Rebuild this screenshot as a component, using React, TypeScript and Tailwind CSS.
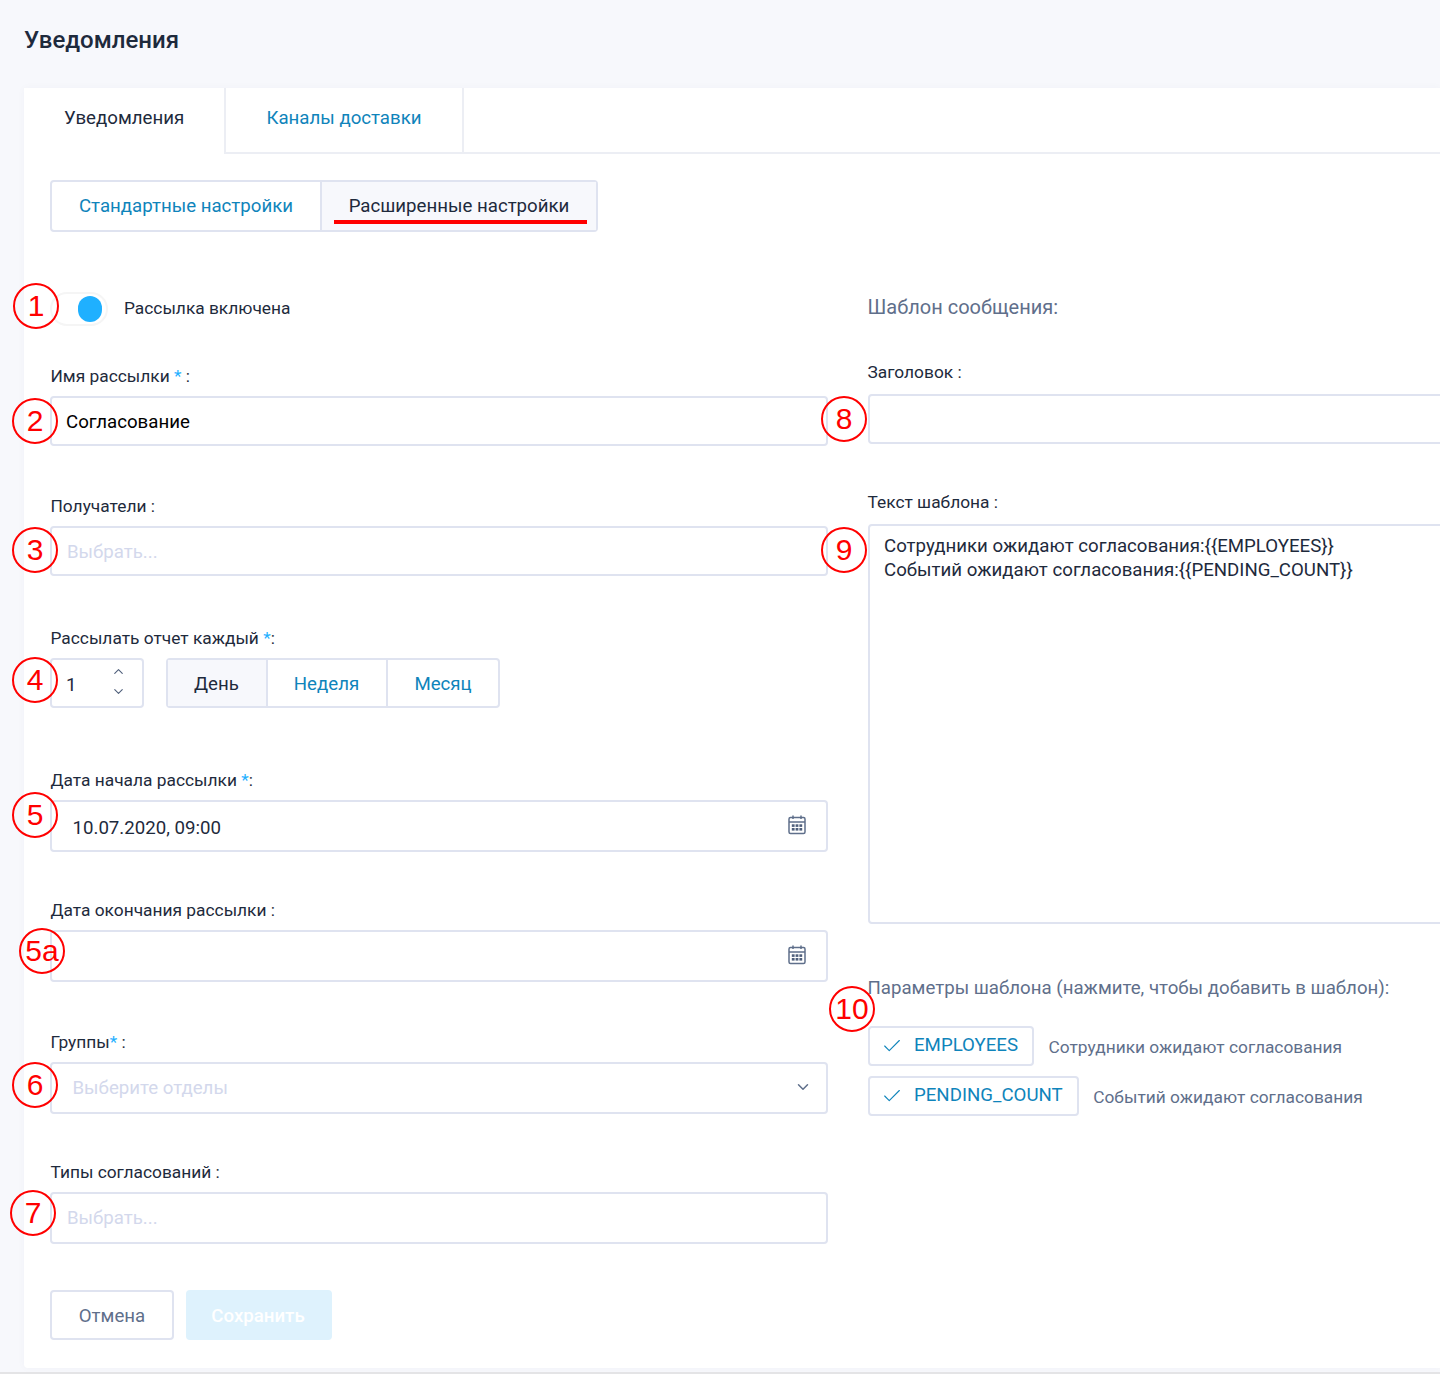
import React from "react";
import { ChevronUp, ChevronDown, Check } from "lucide-react";

const Req = () => <span className="text-[#1fb0ff]">*</span>;

const Label = ({ children }: { children: React.ReactNode }) => (
  <div className="h-5 mb-[10px] text-[17.33px] leading-5 text-[#1e2a3c] pl-[0.5px]">{children}</div>
);

const CalendarIcon = () => (
  <svg width="20" height="22" viewBox="0 0 20 22" fill="none" stroke="#5f6f8b" strokeWidth="1.5" className="mb-[2px]">
    <rect x="2" y="3.5" width="16" height="16" rx="1.5" />
    <path d="M2 8h16M6 1.5v3.5M14 1.5v3.5" />
    <g fill="#4f5f7b" stroke="none">
      <rect x="4.8" y="10.3" width="2.8" height="2.6" />
      <rect x="8.6" y="10.3" width="2.8" height="2.6" />
      <rect x="12.4" y="10.3" width="2.8" height="2.6" />
      <rect x="4.8" y="14" width="2.8" height="2.6" />
      <rect x="8.6" y="14" width="2.8" height="2.6" />
      <rect x="12.4" y="14" width="2.8" height="2.6" />
    </g>
  </svg>
);

const Marker = ({ n, className }: { n: string; className: string }) => (
  <div
    className={`absolute w-[46px] h-[46px] rounded-full border-[2.5px] border-[#ff0000] flex items-center justify-center text-[#ff0000] text-[30px] leading-none font-['Liberation_Sans',sans-serif] ${className}`}
  >
    {n}
  </div>
);

const Chip = ({ name, desc }: { name: string; desc: string }) => (
  <div className="flex items-center h-10">
    <div className="h-10 flex items-center border-2 border-[#dfe3f0] rounded pl-[11px] pr-[14px] text-[#0f84bb] text-[18.66px]">
      <Check size={22} strokeWidth={1.2} className="mr-[11px]" />
      <span>{name}</span>
    </div>
    <span className="ml-[14.5px] pt-1 text-[17.33px] text-[#5f6f8b]">{desc}</span>
  </div>
);

const fieldBox = "border-2 border-[#dfe3f0] rounded flex items-center text-[18.66px]";

export default function App() {
  return (
    <div className="relative w-[1440px] h-[1374px] overflow-hidden bg-[#f7f8fc] font-['Roboto',sans-serif]">
      <h1 className="pl-6 pt-[26px] h-[88px] text-[24px] leading-7 font-medium text-[#1e2a3c]">Уведомления</h1>

      <div className="ml-6 h-[1280px] bg-white rounded-bl shadow-[0_0_8px_rgba(40,50,90,0.03)]">
        <div className="flex h-[66px]">
          <div className="w-[202px] pt-[17px] pl-[40px] border-r-2 border-[#eceef4] text-[18.66px] leading-[26px] text-[#1e2a3c]">Уведомления</div>
          <div className="w-[238px] pt-[17px] text-center border-r-2 border-b-2 border-[#eceef4] text-[18.66px] leading-[26px] text-[#0f84bb]">Каналы доставки</div>
          <div className="flex-1 border-b-2 border-[#eceef4]" />
        </div>

        <div className="pl-[26px] pt-[26px]">
          <div className="relative flex w-[548px] h-[52px] border-2 border-[#dfe3f0] rounded text-[18.66px]">
            <div className="w-[270px] flex items-center justify-center border-r-2 border-[#dfe3f0] text-[#0f84bb] pt-[2px]">Стандартные настройки</div>
            <div className="flex-1 flex items-center justify-center bg-[#f7f8fc] text-[#1e2a3c] pt-[2px]">Расширенные настройки</div>
            <div className="absolute left-[282px] top-[38px] w-[253px] h-1 bg-[#ff0000]" />
          </div>

          <div className="flex mt-[60px]">
            <div className="w-[778px] shrink-0 flex flex-col">
              <div className="flex items-center h-[34px] mb-[40px]">
                <div className="w-[58px] h-[34px] rounded-full border-2 border-[#f5f5f5] flex items-center justify-end pr-[4px]">
                  <div className="w-6 h-[26px] rounded-full bg-[#1fb0ff]" />
                </div>
                <span className="ml-4 text-[17.33px] text-[#1e2a3c]">Рассылка включена</span>
              </div>

              <Label>Имя рассылки <Req /> :</Label>
              <div className={`${fieldBox} h-[50px] mb-[50px] pl-[14px] pt-1 text-black`}>Согласование</div>

              <Label>Получатели :</Label>
              <div className={`${fieldBox} h-[50px] mb-[52px] pl-[15px] pt-1 text-[#d3d8ec]`}>Выбрать...</div>

              <Label>Рассылать отчет каждый <Req />:</Label>
              <div className="mb-[62px] flex gap-[22px]">
                <div className={`${fieldBox} w-[94px] h-[50px] justify-between pl-[14px] pr-[16px] text-[#1e2a3c]`}>
                  <span className="pt-[6px]">1</span>
                  <div className="flex flex-col gap-[5px] mb-[3px] text-[#4f5f7b]">
                    <ChevronUp size={15} strokeWidth={1.8} />
                    <ChevronDown size={15} strokeWidth={1.8} />
                  </div>
                </div>
                <div className="w-[334px] h-[50px] flex border-2 border-[#dfe3f0] rounded text-[18.66px]">
                  <div className="w-[100px] flex items-center justify-center bg-[#f7f8fc] border-r-2 border-[#dfe3f0] text-[#1e2a3c] pt-1 pr-px">День</div>
                  <div className="w-[120px] flex items-center justify-center border-r-2 border-[#dfe3f0] text-[#0f84bb] pt-1 pr-px">Неделя</div>
                  <div className="flex-1 flex items-center justify-center text-[#0f84bb] pt-1">Месяц</div>
                </div>
              </div>

              <Label>Дата начала рассылки <Req />:</Label>
              <div className={`${fieldBox} h-[52px] mb-[48px] justify-between pl-[20.5px] pr-[19px] text-[#1e2a3c]`}>
                <span className="pt-[6px]">10.07.2020, 09:00</span>
                <CalendarIcon />
              </div>

              <Label>Дата окончания рассылки :</Label>
              <div className={`${fieldBox} h-[52px] mb-[50px] justify-end pr-[19px]`}>
                <CalendarIcon />
              </div>

              <Label>Группы<Req /> :</Label>
              <div className={`${fieldBox} h-[52px] mb-[48px] justify-between pl-[20.5px] pr-[14px] text-[#d3d8ec]`}>
                <span className="pt-[2px]">Выберите отделы</span>
                <ChevronDown size={18} strokeWidth={2} className="text-[#5f6f8b] mb-[2px]" />
              </div>

              <Label>Типы согласований :</Label>
              <div className={`${fieldBox} h-[52px] mb-[46px] pl-[15px] pt-[2px] text-[#d3d8ec]`}>Выбрать...</div>

              <div className="flex gap-3">
                <div className="w-[124px] h-[50px] border-2 border-[#dfe3f0] rounded flex items-center justify-center pt-1 text-[18.66px] text-[#5f6f8b]">Отмена</div>
                <div className="w-[146px] h-[50px] rounded bg-[#def2fd] flex items-center justify-center pt-1 text-[18.66px] font-medium text-white pr-[2px]">Сохранить</div>
              </div>
            </div>

            <div className="ml-10 w-[640px] shrink-0 flex flex-col">
              <div className="h-[30px] mb-[40px] leading-[30px] text-[20px] text-[#5f6f8b] -ml-[0.5px]">Шаблон сообщения:</div>
              <div className="-ml-[1px]"><Label>Заголовок :</Label></div>
              <div className="-mt-[10px] mb-[48px] pt-[12px]">
                <div className="h-[50px] border-2 border-[#dfe3f0] rounded" />
              </div>
              <div className="-ml-[1px]"><Label>Текст шаблона :</Label></div>
              <div className="-mt-[10px] mb-[52px] pt-[12px]">
                <div className="h-[400px] border-2 border-[#dfe3f0] rounded pl-[14px] pt-[8px] text-[18.66px] leading-6 text-[#1e2a3c]">
                  Сотрудники ожидают согласования:{"{{EMPLOYEES}}"}
                  <br />
                  Событий ожидают согласования:{"{{PENDING_COUNT}}"}
                </div>
              </div>
              <div className="h-6 mb-[26px] leading-6 text-[18.66px] text-[#5f6f8b] -ml-[0.5px]">Параметры шаблона (нажмите, чтобы добавить в шаблон):</div>
              <div className="flex flex-col gap-[10px]">
                <Chip name="EMPLOYEES" desc="Сотрудники ожидают согласования" />
                <Chip name="PENDING_COUNT" desc="Событий ожидают согласования" />
              </div>
            </div>
          </div>
        </div>
      </div>
      <div className="absolute left-0 right-0 bottom-0 h-[2px] bg-[#e4e4e6]" />

      <Marker n="1" className="left-[13px] top-[283px]" />
      <Marker n="2" className="left-[12px] top-[398px]" />
      <Marker n="3" className="left-[12px] top-[527px]" />
      <Marker n="4" className="left-[12px] top-[657px]" />
      <Marker n="5" className="left-[12px] top-[792px]" />
      <Marker n="5a" className="left-[19px] top-[928px]" />
      <Marker n="6" className="left-[12px] top-[1062px]" />
      <Marker n="7" className="left-[10px] top-[1190px]" />
      <Marker n="8" className="left-[821px] top-[396px]" />
      <Marker n="9" className="left-[821px] top-[527px]" />
      <Marker n="10" className="left-[829px] top-[986px]" />
    </div>
  );
}
